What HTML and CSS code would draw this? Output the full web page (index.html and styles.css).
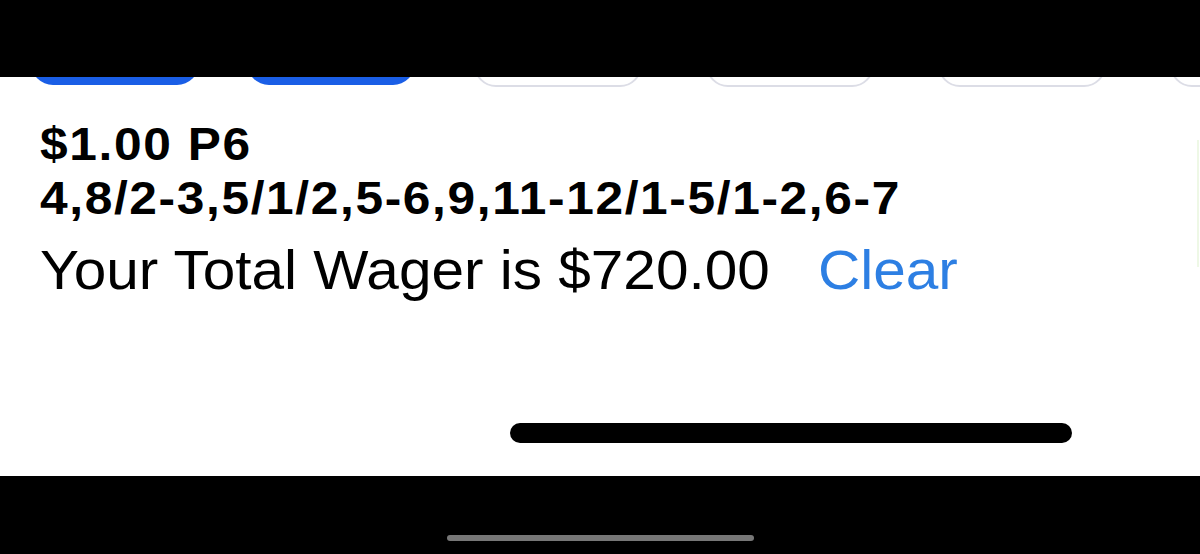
FILE: index.html
```html
<!DOCTYPE html>
<html lang="en">
<head>
<meta charset="utf-8">
<title>Wager</title>
<link rel="stylesheet" href="styles.css">
</head>
<body>
<div class="screen">
  <div class="topbar"></div>
  <main class="sheet">
    <div class="chips">
      <div class="chip-group">
        <button class="chip chip-primary"></button>
        <button class="chip chip-primary"></button>
      </div>
      <div class="chip-group chip-group-secondary">
        <button class="chip chip-outline"></button>
        <button class="chip chip-outline"></button>
        <button class="chip chip-outline"></button>
        <button class="chip chip-outline"></button>
      </div>
    </div>
    <section class="ticket">
      <div class="bet-line">$1.00 P6</div>
      <div class="bet-line">4,8/2-3,5/1/2,5-6,9,11-12/1-5/1-2,6-7</div>
      <div class="total-line">Your Total Wager is $720.00<a class="clear-link">Clear</a></div>
    </section>
    <div class="side-accent"></div>
    <div class="home-indicator"></div>
  </main>
  <div class="bottombar"><div class="grabber"></div></div>
</div>
</body>
</html>
```
FILE: styles.css
```css
html, body {
  margin: 0;
  padding: 0;
  background: #000;
}
.screen {
  width: 1200px;
  height: 554px;
  display: flex;
  flex-direction: column;
  font-family: "Liberation Sans", Arial, sans-serif;
}
.topbar {
  height: 77px;
  background: #000;
  flex: none;
}
.sheet {
  position: relative;
  height: 399px;
  flex: none;
  background: #fff;
  overflow: hidden;
  display: flex;
  flex-direction: column;
}
.chips {
  display: flex;
  gap: 59px;
  margin-top: -42px;
  padding-left: 31px;
  height: 52px;
  align-items: flex-start;
  flex: none;
}
.chip-group {
  display: flex;
  gap: 48px;
  align-items: flex-start;
}
.chip-group-secondary {
  gap: 64px;
}
.chip {
  display: block;
  width: 168px;
  border-radius: 22px;
  padding: 0;
  margin: 0;
  box-sizing: border-box;
  flex: none;
}
.chip-primary {
  height: 50px;
  background: #1a5ee6;
  border: none;
}
.chip-outline {
  height: 52px;
  background: #fff;
  border: 2px solid #dcdde6;
}
.ticket {
  margin-top: 30px;
  padding-left: 40px;
  color: #000;
  flex: none;
}
.bet-line {
  font-size: 46px;
  font-weight: bold;
  line-height: 54px;
  letter-spacing: 1.5px;
  white-space: nowrap;
  transform: scaleX(1.08);
  transform-origin: left center;
}
.total-line {
  margin-top: 13px;
  font-size: 56px;
  line-height: 64px;
  white-space: nowrap;
  transform: scaleX(1.045);
  transform-origin: left center;
}
.clear-link {
  color: #2d7fe3;
  margin-left: 46px;
}
.side-accent {
  position: absolute;
  right: 1px;
  top: 63px;
  width: 2px;
  height: 127px;
  background: #eef8e6;
}
.home-indicator {
  margin-top: 121px;
  margin-left: 510px;
  width: 562px;
  height: 20px;
  border-radius: 10px;
  background: #000;
  flex: none;
}
.bottombar {
  height: 78px;
  background: #000;
  flex: none;
  padding-top: 59px;
  box-sizing: border-box;
}
.grabber {
  margin-left: 447px;
  width: 307px;
  height: 6px;
  border-radius: 3px;
  background: #777;
}
```
